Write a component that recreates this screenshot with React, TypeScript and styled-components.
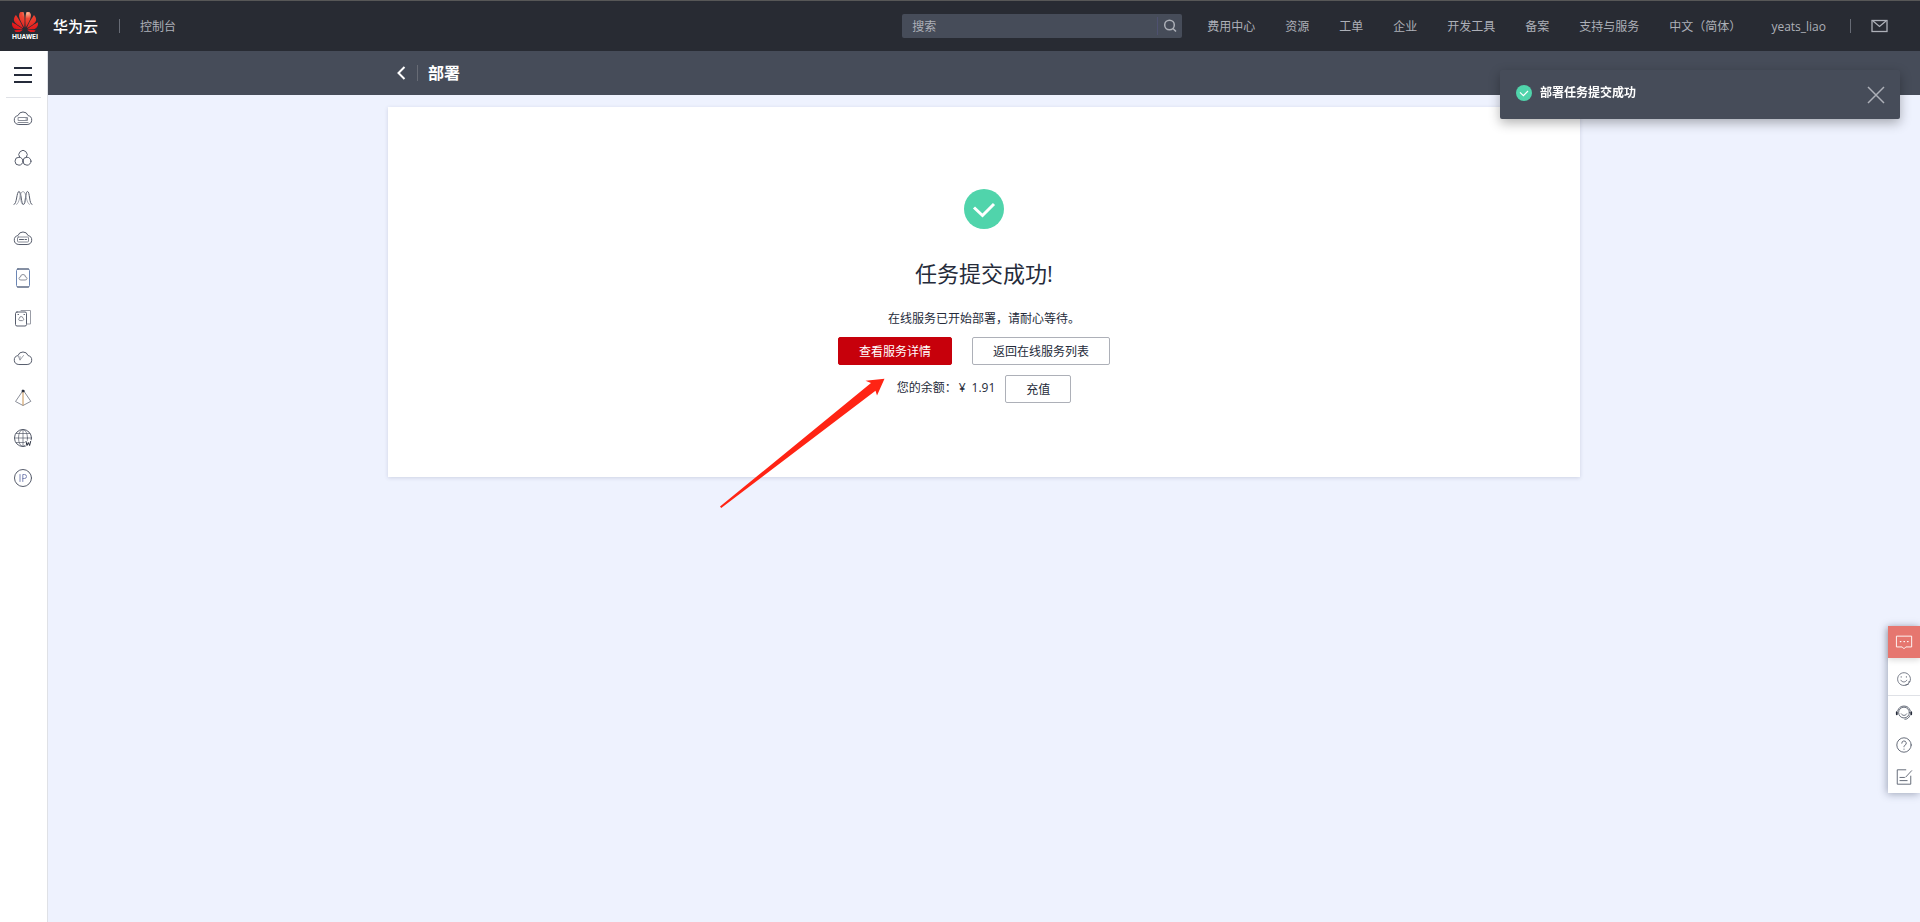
import React from "react";
import styled, { createGlobalStyle, css } from "styled-components";
import { SiHuawei } from "react-icons/si";

const GlobalStyle = createGlobalStyle`
  *, *::before, *::after { box-sizing: border-box; }
  body {
    margin: 0;
    background: #eef2fe;
    color: #252b3a;
    font-family: "Open Sans", "Noto Sans CJK SC", sans-serif;
    font-size: 12px;
    line-height: 18px;
  }
  button, input { font: inherit; color: inherit; }
  a { color: inherit; text-decoration: none; }
  svg { display: block; flex: none; }
`;

const Page = styled.div`
  min-height: 100vh;
  display: flex;
  flex-direction: column;
`;

const Header = styled.header`
  display: flex;
  align-items: center;
  height: 51px;
  padding: 0 32px 0 12px;
  border-top: 1px solid #575757;
  background: #282b33;
  color: #adb0b8;
`;

const Brand = styled.a`
  display: flex;
  align-items: center;
  gap: 15px;
  color: #fff;
  font-size: 15px;
  font-weight: 500;
`;

const Logo = styled.span`
  display: flex;
  flex-direction: column;
  align-items: center;
  gap: 2px;
  width: 26px;
  font-family: Roboto, sans-serif;
  font-size: 7px;
  font-weight: 700;
  line-height: 6px;
`;

const Flower = styled(SiHuawei)`
  width: 26px;
  height: 20px;
  path { fill: url(#petal-red); }
`;

const GradientDefs = styled.svg`
  position: absolute;
`;

const Divider = styled.span<{ $height: number; $space: string }>`
  width: 1px;
  height: ${(p) => p.$height}px;
  margin: ${(p) => p.$space};
  background: #676b75;
`;

const Search = styled.form`
  display: flex;
  align-items: center;
  width: 280px;
  height: 24px;
  margin: 0 25px 0 auto;
  border-radius: 2px;
  background: #464c59;
`;

const SearchInput = styled.input`
  flex: 1;
  min-width: 0;
  padding: 2px 10px 0;
  border: 0;
  outline: 0;
  background: none;
  &::placeholder { color: #adb0b8; opacity: 1; }
`;

const IconButton = styled.button`
  display: flex;
  align-items: center;
  justify-content: center;
  padding: 0;
  border: 0;
  background: none;
  cursor: pointer;
`;

const SearchButton = styled(IconButton)`
  width: 25px;
  height: 18px;
  border-left: 1px solid #4e5170;
`;

const Nav = styled.nav`
  display: flex;
  align-items: center;
  gap: 30px;
  white-space: nowrap;
`;

const NavLink = styled.a`
  padding-top: 2px;
`;

const Body = styled.div`
  flex: 1;
  display: flex;
`;

const Sidebar = styled.aside`
  flex: none;
  display: flex;
  flex-direction: column;
  align-items: center;
  width: 48px;
  padding-right: 1px;
  border-right: 1px solid #dfe1e6;
  background: #fff;
`;

const MenuButton = styled(IconButton)`
  width: 35px;
  height: 47px;
  padding-top: 2px;
  border-bottom: 1px solid #dfe1e6;
`;

const SideLink = styled.a`
  display: flex;
  align-items: center;
  justify-content: center;
  width: 46px;
  height: 40px;
`;

const Main = styled.main`
  flex: 1;
  min-width: 0;
`;

const TitleBar = styled.div`
  height: 44px;
  background: #464c59;
  color: #fff;
`;

const column = css`
  width: 100%;
  max-width: 1192px;
  margin: 0 auto;
`;

const TitleInner = styled.div`
  ${column}
  display: flex;
  align-items: center;
  height: 100%;
  padding-left: 9px;
`;

const PageTitle = styled.h1`
  margin: 0;
  font-size: 16px;
  line-height: 24px;
  font-weight: 700;
`;

const Card = styled.section`
  ${column}
  position: relative;
  display: flex;
  flex-direction: column;
  align-items: center;
  margin-top: 12px;
  padding: 82px 20px 74px;
  background: #fff;
  box-shadow: 0 1px 4px rgba(40, 50, 90, 0.16);
`;

const ResultTitle = styled.h2`
  margin: 27px 0 20px;
  font-size: 22px;
  line-height: 34px;
  font-weight: 400;
`;

const ResultText = styled.p`
  margin: 0 0 9px;
`;

const ButtonRow = styled.div`
  display: flex;
  gap: 20px;
  margin: 0 20px 10px 0;
`;

const Button = styled.button<{ $primary?: boolean }>`
  height: 28px;
  padding: 2px 20px 0;
  border: 1px solid ${(p) => (p.$primary ? "#c7000b" : "#adb0b8")};
  border-radius: 2px;
  background: ${(p) => (p.$primary ? "#c7000b" : "#fff")};
  color: ${(p) => (p.$primary ? "#fff" : "#252b3a")};
  cursor: pointer;
`;

const BalanceRow = styled.div`
  display: flex;
  gap: 10px;
`;

const Balance = styled.span`
  display: flex;
  gap: 2px;
  line-height: 26px;
`;

const Amount = styled.span`
  display: flex;
  gap: 6px;
`;

const Arrow = styled.svg`
  position: absolute;
  top: 271px;
  left: calc(50% - 264px);
  pointer-events: none;
`;

const Toast = styled.div`
  position: fixed;
  top: 70px;
  right: 20px;
  display: flex;
  align-items: center;
  gap: 8px;
  width: 400px;
  height: 49px;
  padding: 0 15px 4px 16px;
  border-radius: 2px;
  background: #464c59;
  box-shadow: 0 4px 12px rgba(0, 0, 0, 0.3);
  color: #fff;
  font-weight: 700;
`;

const CloseButton = styled(IconButton)`
  margin: 4px 0 0 auto;
`;

const Floating = styled.div`
  position: fixed;
  right: 0;
  bottom: 129px;
  width: 32px;
  background: #fff;
  box-shadow: -1px 1px 8px rgba(40, 50, 80, 0.4);
`;

const FloatButton = styled(IconButton)<{ $variant?: "alert" | "smile" }>`
  width: 32px;
  height: 32px;
  ${(p) => p.$variant === "alert" && css`
    background: #e6766f;
    box-shadow: 0 2px 6px rgba(0, 0, 0, 0.15);
  `}
  ${(p) => p.$variant === "smile" && css`
    height: 38px;
    margin-bottom: 1px;
    padding-top: 5px;
    border-bottom: 1px solid #dfe1e6;
  `}
`;

const Line = ({ size = 20, stroke = "#575d6c", children }: { size?: number; stroke?: string; children: React.ReactNode }) => (
  <svg width={size} height={size} viewBox="0 0 20 20" fill="none" stroke={stroke} strokeWidth="1" strokeLinejoin="round" strokeLinecap="round" aria-hidden="true">
    {children}
  </svg>
);

const Check = ({ size }: { size: number }) => (
  <svg width={size} height={size} viewBox="0 0 40 40" aria-hidden="true">
    <circle cx="20" cy="20" r="20" fill="#50d4ab" />
    <path d="M10 18.500l8.500 8L30 15" fill="none" stroke="#fff" strokeWidth="3" />
  </svg>
);

const cloud = "M5.500 16.500a4.500 4.500 0 0 1-.6-8.900 5.400 5.400 0 0 1 10.200 0 4.500 4.500 0 0 1-.6 8.900z";

const services = [
  { name: "弹性云服务器", art: <><path d={cloud} /><path d="M5.500 9.500h9v3h-9zM5 14.500h10" stroke="#8a8e99" /><path d="M13 11h.5" /></> },
  { name: "对象存储", art: <><path d="M6.800 9.400A4.200 4.200 0 1 1 13.200 9.400" /><circle cx="6" cy="13.200" r="4" /><circle cx="14" cy="13.200" r="4" /></> },
  { name: "弹性伸缩", art: <><path d="M1 16.500C4 16.500 3.500 3.500 6 3.500S8 16.500 10.500 16.500 12 3.500 14.500 3.500 16 16.500 19 16.500" /><path d="M3.500 16.500C7 15.500 6.500 3.500 10 3.500S13 15.500 16.500 16.500M6 3.500C8 4 7 16 9.500 16.500M14 3.500C12 4 13 16 10.500 16.500" stroke="#8a8e99" strokeWidth=".7" /></> },
  { name: "裸金属服务器", art: <><path d={cloud} /><rect x="4.500" y="9" width="11" height="5" rx="1" stroke="#8a8e99" /><path d="M6.500 11.500h4m1.500 0h1.500" /></> },
  { name: "云硬盘", art: <><rect x="3.500" y="1" width="13" height="18" rx="1.500" stroke="#6b86b5" /><path d="M4.500 1h11M4.500 19h11" /><path d="M7.500 12a1.500 1.500 0 0 1 0-3 2.500 2.500 0 0 1 5 0 1.500 1.500 0 0 1 0 3z" stroke="#8a8e99" /></> },
  { name: "云备份", art: <><rect x="2.500" y="4" width="11" height="14" rx="1.500" /><path d="M8 2.500h9.500v13.500H14" stroke="#9a9da6" /><path d="M6.500 12.500a1.200 1.200 0 0 1 0-2.300 1.700 1.700 0 0 1 3.400 0 1.200 1.200 0 0 1 0 2.300z" stroke="#8a8e99" /><path d="M5 6.500h.5m5.500 0h.5" /></> },
  { name: "云数据库", art: <><path d={cloud} /><path d="M5 7.500l2 4.500 3.500-4.500M7 12V8.500" stroke="#8a8e99" strokeWidth=".8" /></> },
  { name: "虚拟私有云", art: <><path d="M10 2.500L2.500 13.500 10 17.500l7.500-4z" stroke="#8a8e99" /><path d="M10 3v14" stroke="#c8914f" /><circle cx="10" cy="3" r="1" fill="#252b3a" stroke="#252b3a" /></> },
  { name: "云解析", art: <><circle cx="10" cy="10" r="8.500" /><ellipse cx="10" cy="10" rx="4.500" ry="8.500" strokeWidth=".7" /><path d="M1.500 10h17M10 1.500v17M3 5.500h14M3 14.500h10" strokeWidth=".7" /><path d="M13 13.500l1 4 1.300-3 1.300 3 1-4" stroke="#fff" strokeWidth="3" /><path d="M13 13.500l1 4 1.300-3 1.300 3 1-4" stroke="#252b3a" /></> },
  { name: "弹性公网", art: <><circle cx="10" cy="10" r="8.500" /><path d="M7 6.500v7M9.800 13.500v-7h1.700a2 2 0 0 1 0 4H9.800" stroke="#7d86b5" /></> },
];

const navItems = ["费用中心", "资源", "工单", "企业", "开发工具", "备案", "支持与服务", "中文（简体）", "yeats_liao"];

export default function App() {
  return (
    <Page>
      <GlobalStyle />
      <Header>
        <Brand href="#">
          <GradientDefs width="0" height="0" aria-hidden="true">
            <defs>
              <radialGradient id="petal-red" cx="0.6" cy="0.1" r="0.8">
                <stop offset="0" stopColor="#f9b894" />
                <stop offset="0.3" stopColor="#ee4632" />
                <stop offset="1" stopColor="#e0161b" />
              </radialGradient>
            </defs>
          </GradientDefs>
          <Logo>
            <Flower viewBox="0 3.670 24 16.660" preserveAspectRatio="none" aria-hidden="true" />
            HUAWEI
          </Logo>
          华为云
        </Brand>
        <Divider $height={14} $space="0 20px 0 21px" />
        <NavLink href="#">控制台</NavLink>
        <Search onSubmit={(e) => e.preventDefault()}>
          <SearchInput type="text" placeholder="搜索" aria-label="搜索" />
          <SearchButton type="submit" aria-label="搜索">
            <svg width="14" height="14" viewBox="0 0 14 14" fill="none" stroke="#adb0b8" strokeWidth="1.500" aria-hidden="true">
              <circle cx="6.500" cy="6" r="4.800" /><path d="M10 9.500l3 3" />
            </svg>
          </SearchButton>
        </Search>
        <Nav>
          {navItems.map((item) => <NavLink key={item} href="#">{item}</NavLink>)}
        </Nav>
        <Divider $height={14} $space="0 20px 0 24px" />
        <IconButton aria-label="消息">
          <svg width="17" height="14" viewBox="0 0 17 14" fill="none" stroke="#adb0b8" strokeWidth="1.300" aria-hidden="true">
            <rect x="1" y="1.500" width="15" height="11" /><path d="M2 2l6.500 5.500L15 2" />
          </svg>
        </IconButton>
      </Header>
      <Body>
        <Sidebar>
          <MenuButton aria-label="服务列表">
            <svg width="18" height="16" viewBox="0 0 18 16" fill="#252b3a" aria-hidden="true">
              <path d="M0 0h18v2H0zM0 7h18v2H0zM0 14h18v2H0z" />
            </svg>
          </MenuButton>
          <nav>
            {services.map((s) => (
              <SideLink key={s.name} href="#" aria-label={s.name}><Line>{s.art}</Line></SideLink>
            ))}
          </nav>
        </Sidebar>
        <Main>
          <TitleBar>
            <TitleInner>
              <IconButton aria-label="返回">
                <svg width="9" height="14" viewBox="0 0 9 14" fill="none" stroke="#fff" strokeWidth="2" aria-hidden="true">
                  <path d="M7.500 1L1.500 7l6 6" />
                </svg>
              </IconButton>
              <Divider $height={16} $space="0 10px 0 11px" />
              <PageTitle>部署</PageTitle>
            </TitleInner>
          </TitleBar>
          <Card>
            <Check size={40} />
            <ResultTitle>任务提交成功!</ResultTitle>
            <ResultText>在线服务已开始部署，请耐心等待。</ResultText>
            <ButtonRow>
              <Button $primary>查看服务详情</Button>
              <Button>返回在线服务列表</Button>
            </ButtonRow>
            <BalanceRow>
              <Balance>您的余额：<Amount><span>¥</span><span>1.91</span></Amount></Balance>
              <Button>充值</Button>
            </BalanceRow>
            <Arrow width="166" height="132" viewBox="0 0 166 132" fill="#ff2414" aria-hidden="true">
              <path d="M164.500 .7L145.500 2.700 151 5 0 128.500 1.200 130 155.500 12.700 157 17.500z" />
            </Arrow>
          </Card>
        </Main>
      </Body>
      <Toast role="status">
        <Check size={16} />
        部署任务提交成功
        <CloseButton aria-label="关闭">
          <svg width="18" height="18" viewBox="0 0 18 18" fill="none" stroke="#adb0b8" strokeWidth="1.500" aria-hidden="true">
            <path d="M1 1l16 16M17 1L1 17" />
          </svg>
        </CloseButton>
      </Toast>
      <Floating>
        <FloatButton $variant="alert" aria-label="反馈">
          <Line size={18} stroke="#fff"><path d="M2 3.500h16.500v12H12L10 17.500 8 15.500H2z" /><path d="M6 9.500h.5m3.500 0h.5m3.500 0h.5" strokeWidth="1.500" /></Line>
        </FloatButton>
        <FloatButton $variant="smile" aria-label="满意度">
          <Line size={16}><path d="M17.500 13a8 8 0 1 1 .5-3.500c.3 3-1 4.500-2.500 4.500M12 17.500l3.500-1" /><path d="M6 11.500c1.500 3 6 3 7.500 0M6.500 7v.8M13 7v.8" /></Line>
        </FloatButton>
        <FloatButton aria-label="在线客服">
          <Line size={18}><circle cx="10" cy="9.500" r="6" /><path d="M3 7.500a7.300 7.300 0 0 1 14 0M7 11c1.500 2.300 4.500 2.300 6 0M16.500 13c-1 2.500-3 4-5.500 4" /><path d="M2 9v2.500M18 9v2.500" stroke="#252b3a" strokeWidth="2" /></Line>
        </FloatButton>
        <FloatButton aria-label="帮助">
          <Line size={18}><circle cx="10" cy="10" r="8" /><path d="M7.500 8a2.500 2.500 0 1 1 3.500 2.300c-.8.400-1 .8-1 1.700M10 14.500v.3" /></Line>
        </FloatButton>
        <FloatButton aria-label="意见">
          <Line size={18}><path d="M12 2H2.500v16h15V9M18.500 3l-6.500 7M5.500 10.500h5M5.500 14h8" /></Line>
        </FloatButton>
      </Floating>
    </Page>
  );
}
